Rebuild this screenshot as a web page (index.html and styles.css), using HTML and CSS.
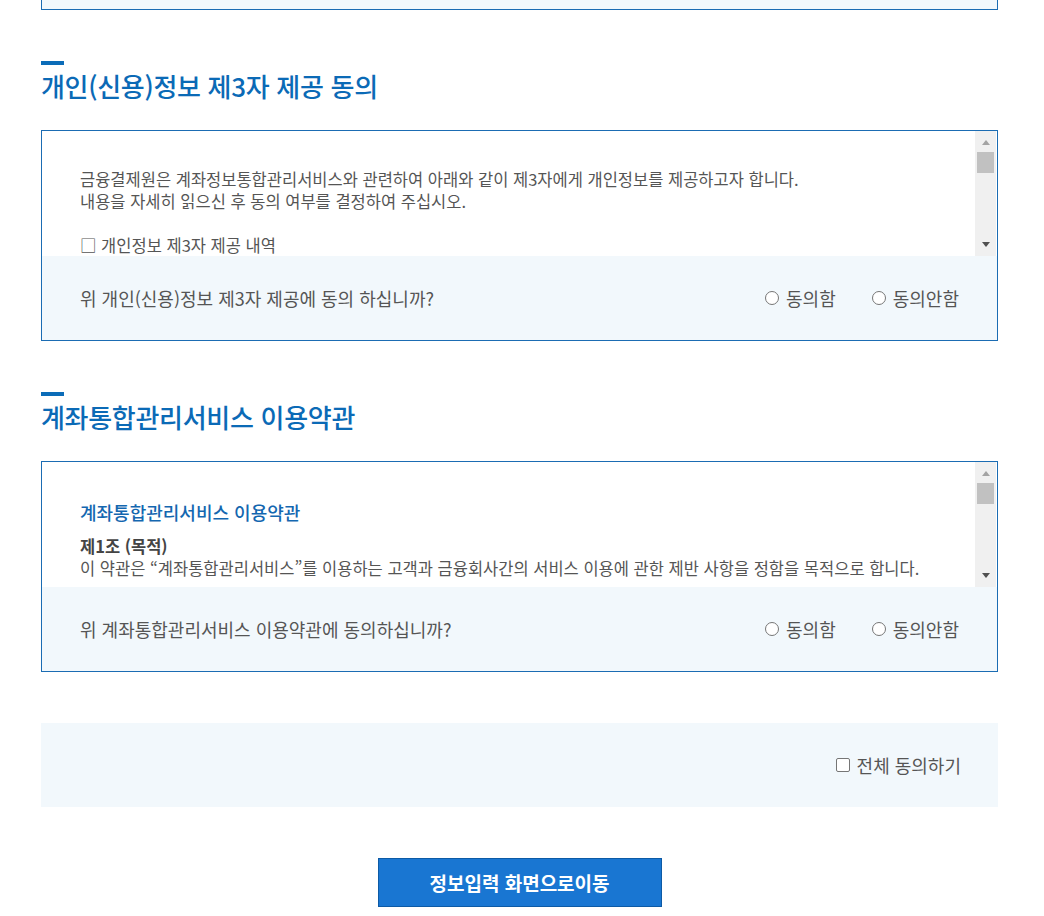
FILE: index.html
```html
<!DOCTYPE html>
<html lang="ko">
<head>
<meta charset="utf-8">
<title>약관 동의</title>
<link rel="stylesheet" href="styles.css">
</head>
<body>
<div class="page">
  <div class="prev-tail"></div>

  <section class="section">
    <div class="sec-bar"></div>
    <h2 class="sec-title">개인(신용)정보 제3자 제공 동의</h2>
    <div class="agree-box">
      <div class="scroll-wrap">
        <div class="scroll-content">
          <p class="txt">금융결제원은 계좌정보통합관리서비스와 관련하여 아래와 같이 제3자에게 개인정보를 제공하고자 합니다.<br>내용을 자세히 읽으신 후 동의 여부를 결정하여 주십시오.</p>
          <p class="txt gap">□ 개인정보 제3자 제공 내역</p>
        </div>
        <div class="scrollbar">
          <span class="arr-up"></span>
          <span class="thumb"></span>
          <span class="track-fill"></span>
          <span class="arr-down"></span>
        </div>
      </div>
      <div class="question">
        <p class="q-text">위 개인(신용)정보 제3자 제공에 동의 하십니까?</p>
        <div class="radios">
          <label class="radio"><input type="radio" name="a1"><span>동의함</span></label>
          <label class="radio"><input type="radio" name="a1"><span>동의안함</span></label>
        </div>
      </div>
    </div>
  </section>

  <section class="section">
    <div class="sec-bar"></div>
    <h2 class="sec-title">계좌통합관리서비스 이용약관</h2>
    <div class="agree-box">
      <div class="scroll-wrap">
        <div class="scroll-content">
          <h3 class="doc-title">계좌통합관리서비스 이용약관</h3>
          <p class="article">제1조 (목적)</p>
          <p class="txt">이 약관은 “계좌통합관리서비스”를 이용하는 고객과 금융회사간의 서비스 이용에 관한 제반 사항을 정함을 목적으로 합니다.</p>
        </div>
        <div class="scrollbar">
          <span class="arr-up"></span>
          <span class="thumb"></span>
          <span class="track-fill"></span>
          <span class="arr-down"></span>
        </div>
      </div>
      <div class="question">
        <p class="q-text">위 계좌통합관리서비스 이용약관에 동의하십니까?</p>
        <div class="radios">
          <label class="radio"><input type="radio" name="a2"><span>동의함</span></label>
          <label class="radio"><input type="radio" name="a2"><span>동의안함</span></label>
        </div>
      </div>
    </div>
  </section>

  <div class="all-agree">
    <label class="check"><input type="checkbox"><span>전체 동의하기</span></label>
  </div>

  <div class="btn-row">
    <button type="button" class="btn-primary">정보입력 화면으로이동</button>
  </div>
</div>
</body>
</html>
```

FILE: styles.css
```css
* { box-sizing: border-box; }

html, body {
  margin: 0;
  padding: 0;
  background: #ffffff;
}

body {
  font-family: "Noto Sans CJK KR", "Noto Sans", "Liberation Sans", sans-serif;
  color: #555555;
}

.page {
  width: 957px;
  margin-left: 41px;
  padding-bottom: 40px;
}

.prev-tail {
  height: 10px;
  background: #f2f8fc;
  border: 1px solid #1b6cb3;
  border-top: 0;
}

.section {
  margin-top: 51px;
}

.sec-bar {
  width: 23px;
  height: 4px;
  background: #0b6cb8;
}

.sec-title {
  margin: 4px 0 27px;
  font-size: 26px;
  line-height: 34px;
  font-weight: 500;
  color: #0b6ab6;
  letter-spacing: -0.3px;
}

.agree-box {
  border: 1px solid #1b6cb3;
  background: #ffffff;
}

.scroll-wrap {
  display: flex;
  height: 125px;
}

.scroll-content {
  flex: 1;
  overflow: hidden;
  padding: 37px 38px 0 38px;
}

.txt {
  margin: 0;
  font-size: 16.5px;
  line-height: 22px;
  color: #555555;
  white-space: nowrap;
}

.txt.gap {
  margin-top: 22px;
}

.doc-title {
  margin: 1px 0 11px;
  font-size: 18px;
  line-height: 24px;
  font-weight: 500;
  color: #1467b0;
}

.article {
  margin: 0;
  font-size: 16.5px;
  line-height: 22px;
  font-weight: 700;
  color: #444444;
}

.scrollbar {
  width: 21px;
  margin-right: 1px;
  background: #f0f0f0;
  display: flex;
  flex-direction: column;
  align-items: center;
  padding: 9px 0 9px;
}

.arr-up {
  width: 0;
  height: 0;
  border-left: 4.5px solid transparent;
  border-right: 4.5px solid transparent;
  border-bottom: 5px solid #a3a3a3;
}

.thumb {
  width: 17px;
  height: 21px;
  margin-top: 7px;
  background: #c1c1c1;
}

.track-fill {
  flex: 1;
}

.arr-down {
  width: 0;
  height: 0;
  border-left: 4.5px solid transparent;
  border-right: 4.5px solid transparent;
  border-top: 5px solid #505050;
}

.question {
  height: 84px;
  background: #f2f8fc;
  display: flex;
  align-items: center;
  justify-content: space-between;
  padding: 0 38px 0 38px;
}

.q-text {
  margin: 0;
  font-size: 18px;
  color: #555555;
}

.radios {
  display: flex;
  gap: 36px;
}

.radio, .check {
  display: flex;
  align-items: center;
  gap: 7px;
  font-size: 18px;
  color: #555555;
  cursor: pointer;
}

.radio input {
  appearance: none;
  -webkit-appearance: none;
  margin: 0;
  width: 14px;
  height: 14px;
  border: 1.5px solid #767676;
  border-radius: 50%;
  background: #ffffff;
}

.all-agree {
  margin-top: 51px;
  height: 84px;
  background: #f2f8fc;
  display: flex;
  align-items: center;
  justify-content: flex-end;
  padding: 0 37px;
}

.check input {
  appearance: none;
  -webkit-appearance: none;
  margin: 0;
  width: 14px;
  height: 14px;
  border: 1.5px solid #767676;
  border-radius: 2px;
  background: #ffffff;
}

.btn-row {
  margin-top: 51px;
  display: flex;
  justify-content: center;
}

.btn-primary {
  width: 284px;
  height: 49px;
  background: #1976d2;
  border: 1px solid #0d5aa5;
  color: #ffffff;
  font-family: inherit;
  font-size: 19px;
  font-weight: 700;
  cursor: pointer;
}
```
